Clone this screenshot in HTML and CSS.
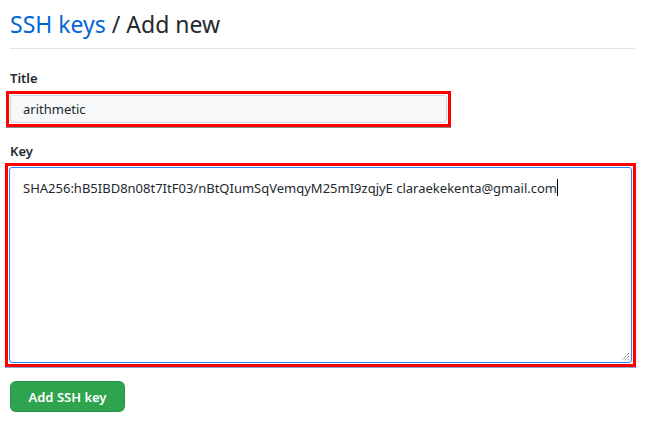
FILE: index.html
```html
<!DOCTYPE html>
<html>
<head>
<meta charset="utf-8">
<link rel="stylesheet" href="styles.css">
</head>
<body>
<div class="page">
  <h2 class="subhead"><a class="crumb" href="#">SSH keys</a> / Add new</h2>
  <form class="form">
    <div class="group">
      <label class="label">Title</label>
      <div class="mark mark-title">
        <input class="input" type="text" value="arithmetic">
      </div>
    </div>
    <div class="group">
      <label class="label">Key</label>
      <div class="mark mark-key">
        <div class="textarea"><span class="keytext">SHA256:hB5IBD8n08t7ItF03/nBtQIumSqVemqyM25mI9zqjyE claraekekenta@gmail.com</span><span class="caret"></span><span class="grip"><svg width="9" height="9" viewBox="0 0 9 9"><path d="M8 1 L1 8 M8 4 L4 8 M8 7 L7 8" stroke="#555" stroke-width="1" stroke-dasharray="1 1" fill="none"/></svg></span></div>
      </div>
    </div>
    <button class="btn" type="button">Add SSH key</button>
  </form>
</div>
</body>
</html>
```

FILE: styles.css
```css
html, body {
  margin: 0;
  padding: 0;
  background: #fff;
}
body {
  font-family: "Noto Sans", "Open Sans", sans-serif;
  color: #24292e;
  font-size: 14px;
}
.page {
  padding: 0 10px;
}
.subhead {
  margin: 0;
  padding: 9px 0 8px 0;
  font-size: 23px;
  font-weight: 400;
  line-height: 31px;
  border-bottom: 1px solid #e1e4e8;
  color: #24292e;
}
.crumb {
  color: #0366d6;
  text-decoration: none;
}
.form {
  padding-top: 19px;
}
.group {
  margin-bottom: 14px;
}
.label {
  display: block;
  font-weight: 600;
  font-size: 13px;
  line-height: 20px;
  margin-bottom: 3px;
}
.mark {
  border: 3px solid #ff0000;
  margin-left: -4px;
  padding: 1px;
  box-sizing: border-box;
}
.mark-title {
  width: 445px;
  box-shadow: 0 1px 0 #8a8a8a;
}
.mark-key {
  width: 631px;
  margin-left: -5px;
  margin-top: -1px;
  box-shadow: 0 1px 0 #8aa8d0;
}
.input {
  display: block;
  width: 100%;
  box-sizing: border-box;
  height: 28px;
  margin: 0;
  padding: 0 12px;
  border: 1px solid #d1d5da;
  border-radius: 3px;
  background: #f6f8fa;
  font-family: inherit;
  font-size: 13px;
  color: #24292e;
  outline: none;
}
.textarea {
  position: relative;
  height: 196px;
  box-sizing: border-box;
  border: 1px solid #2188ff;
  border-radius: 3px;
  background: #fff;
  padding: 10px 13px;
  font-size: 13px;
  line-height: 20px;
  color: #24292e;
  white-space: nowrap;
}
.caret {
  display: inline-block;
  width: 1px;
  height: 17px;
  background: #000;
  vertical-align: -3px;
}
.grip {
  position: absolute;
  right: 1px;
  bottom: 1px;
  width: 9px;
  height: 9px;
  display: flex;
}
.btn {
  margin-top: 0;
  display: block;
  width: 115px;
  height: 31px;
  border: 1px solid rgba(27, 31, 35, 0.15);
  border-radius: 6px;
  background: #2ea44f;
  color: #fff;
  font-family: inherit;
  font-weight: 600;
  font-size: 13px;
  padding: 0;
}
```
